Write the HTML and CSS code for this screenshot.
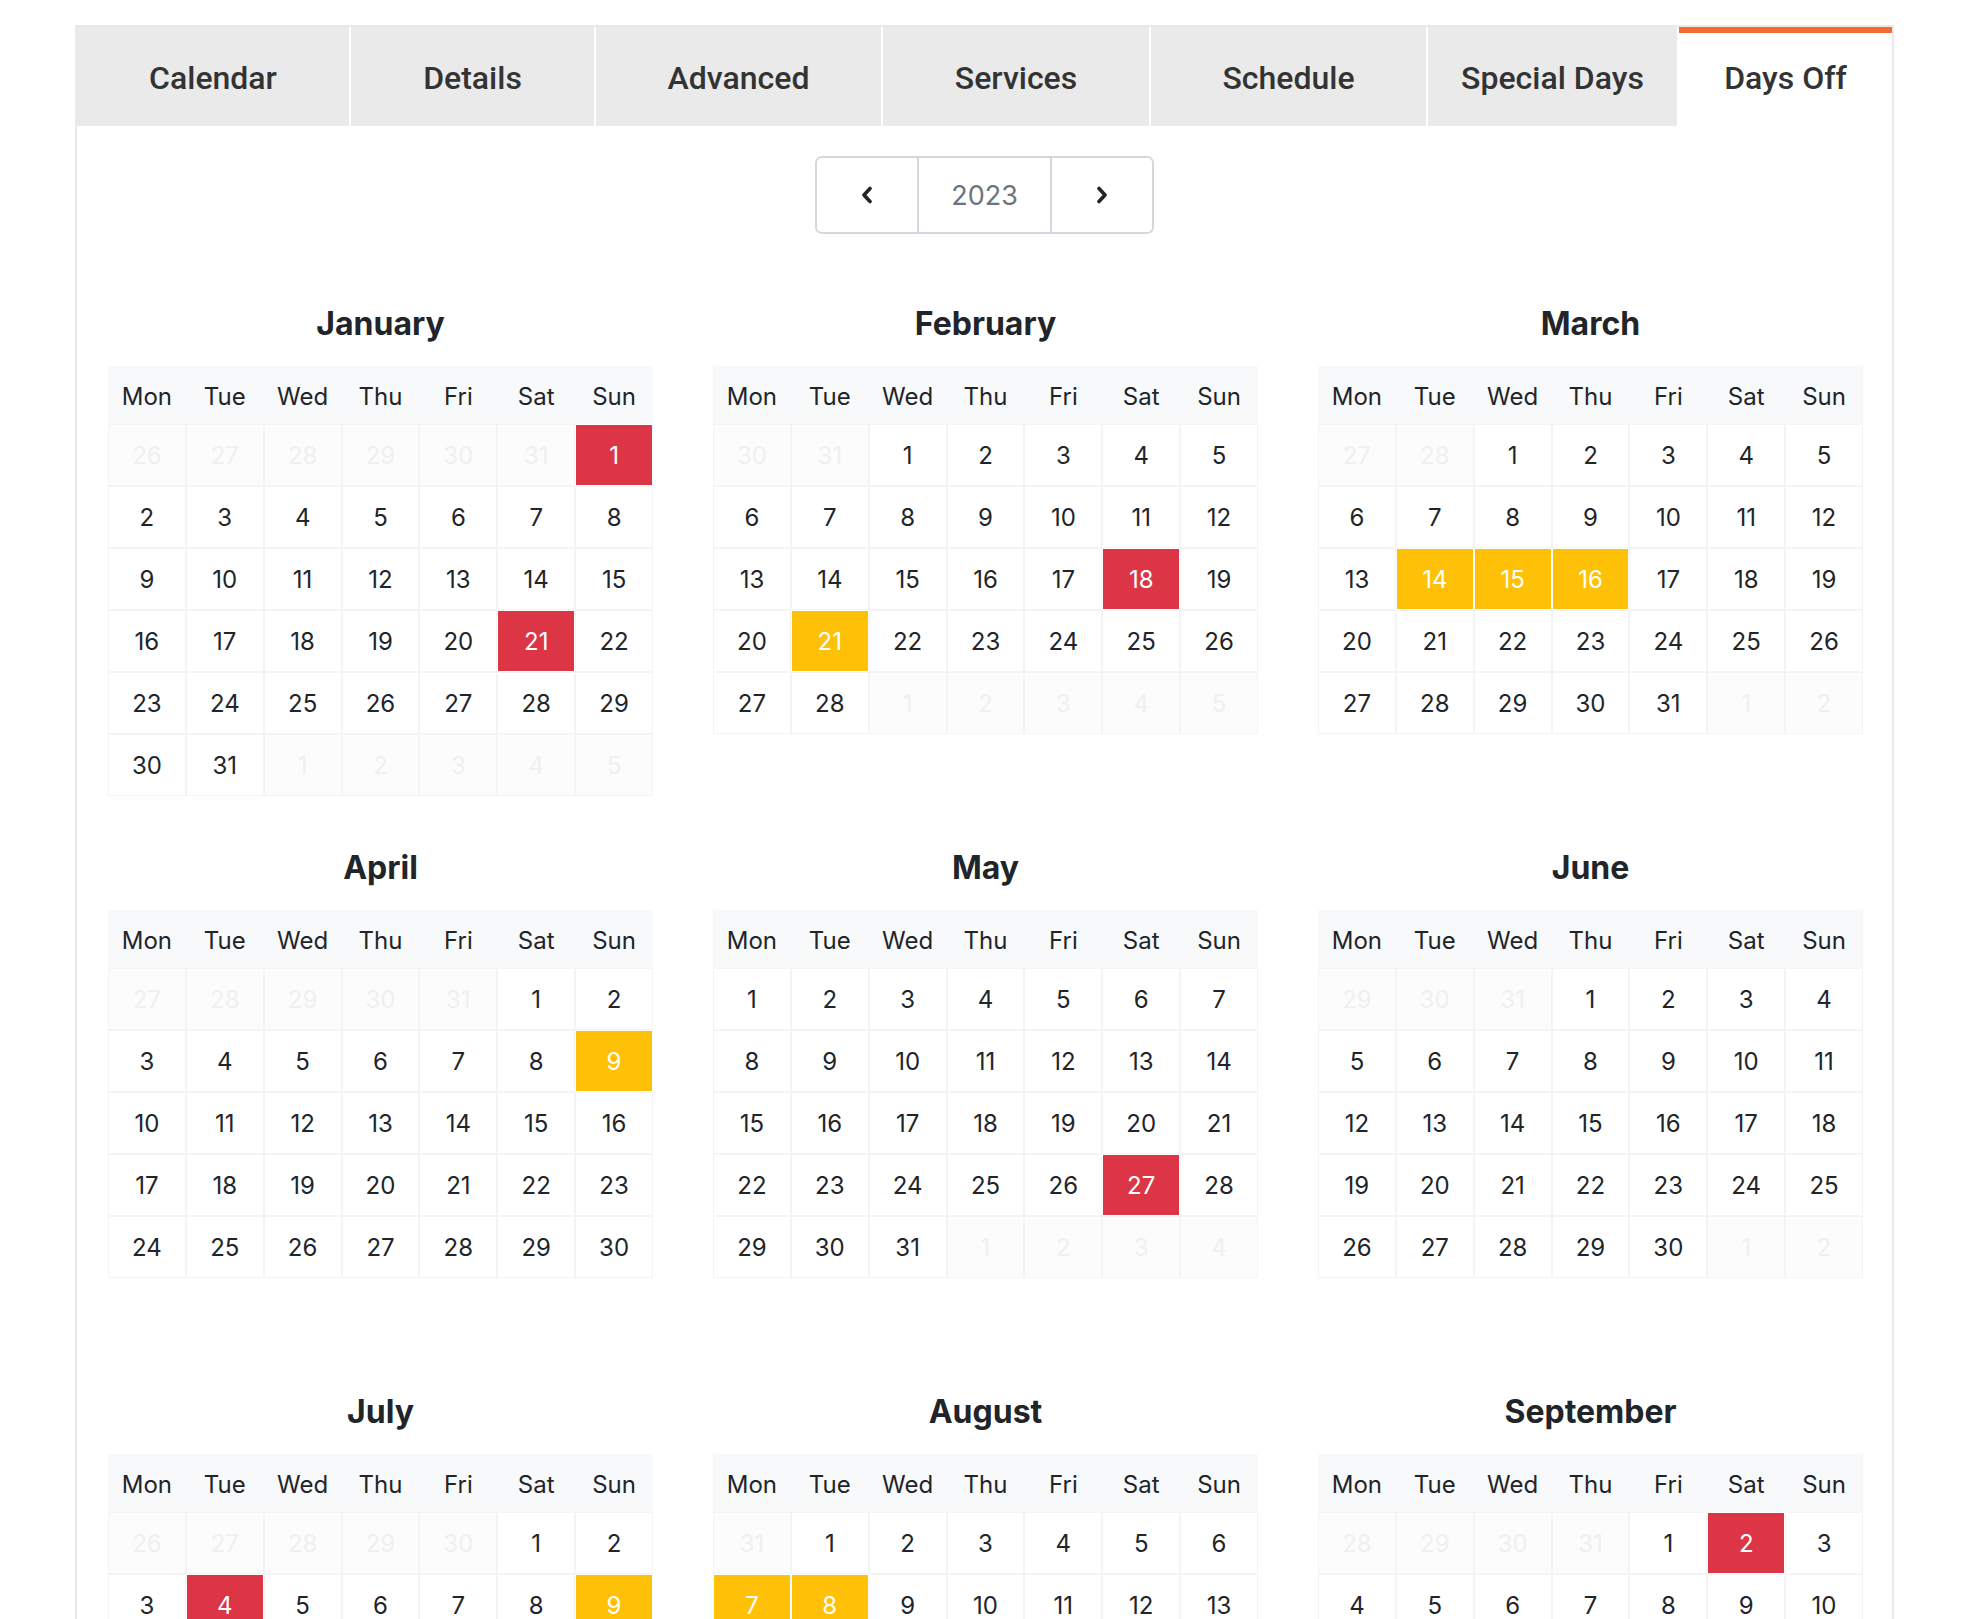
FILE: index.html
```html
<!DOCTYPE html>
<html lang="en">
<head>
<meta charset="utf-8">
<title>Days Off</title>
<link rel="stylesheet" href="styles.css">
</head>
<body>
<div class="panel">
  <nav class="tabs">
    <div class="tab tab-calendar">Calendar</div>
    <div class="tab tab-details">Details</div>
    <div class="tab tab-advanced">Advanced</div>
    <div class="tab tab-services">Services</div>
    <div class="tab tab-schedule">Schedule</div>
    <div class="tab tab-special">Special Days</div>
    <div class="tab tab-off active">Days Off</div>
  </nav>
  <div class="year-nav">
    <button class="nav-btn" type="button" aria-label="Previous year">
      <svg width="14" height="18" viewBox="0 0 14 18"><path d="M10 2.5 L4 9 L10 15.5" fill="none" stroke="#212529" stroke-width="3.6" stroke-linecap="round" stroke-linejoin="round"/></svg>
    </button>
    <div class="year">2023</div>
    <button class="nav-btn" type="button" aria-label="Next year">
      <svg width="14" height="18" viewBox="0 0 14 18"><path d="M4 2.5 L10 9 L4 15.5" fill="none" stroke="#212529" stroke-width="3.6" stroke-linecap="round" stroke-linejoin="round"/></svg>
    </button>
  </div>
  <div class="months" id="months"></div>
</div>
<script src="script.js"></script>
</body>
</html>
```

FILE: styles.css
```css
* { box-sizing: border-box; }
body {
  margin: 0;
  background: #fff;
  font-family: Inter, "Noto Sans", "Liberation Sans", sans-serif;
  color: #212529;
}
.panel {
  margin: 25px 0 0 75px;
  width: 1819px;
  min-height: 2200px;
  border: 2px solid #e9e9e9;
  border-bottom: none;
}
.tabs {
  display: flex;
  gap: 2px;
  height: 99px;
  background: #fff;
}
.tab {
  flex: 0 0 auto;
  display: flex;
  align-items: center;
  justify-content: center;
  padding-top: 2px;
  background: #eaeaea;
  font-family: Roboto, "Liberation Sans", sans-serif;
  font-weight: 500;
  font-size: 32px;
  color: #333;
  white-space: nowrap;
}
.tab-calendar { width: 272px; }
.tab-details { width: 243px; }
.tab-advanced { width: 285px; }
.tab-services { width: 266px; }
.tab-schedule { width: 275px; }
.tab-special { width: 249px; }
.tab-off { flex: 1 1 auto; }
.tab.active {
  background: #fff;
  box-shadow: inset 0 6px 0 #f36b32;
}
.year-nav {
  display: flex;
  width: 339px;
  height: 78px;
  margin: 30px auto 0;
  border: 2px solid #d3d8de;
  border-radius: 7px;
  overflow: hidden;
}
.nav-btn {
  width: 100px;
  border: none;
  background: #fff;
  display: flex;
  align-items: center;
  justify-content: center;
  padding: 0;
}
.year {
  flex: 1;
  display: flex;
  align-items: center;
  justify-content: center;
  border-left: 2px solid #d3d8de;
  border-right: 2px solid #d3d8de;
  font-size: 27px;
  color: #6c757d;
}
.months {
  display: grid;
  grid-template-columns: repeat(3, 545px);
  column-gap: 60px;
  row-gap: 51px;
  padding: 0 29px 0 31px;
  margin-top: 70px;
}
.month {
  min-height: 493px;
}
.month-title {
  margin: 0 0 22px;
  height: 40px;
  line-height: 40px;
  text-align: center;
  font-size: 32px;
  font-weight: 700;
  color: #212529;
}
.weekdays {
  display: grid;
  grid-template-columns: repeat(7, 1fr);
  height: 58px;
  padding-top: 2px;
  background: #f8f9fa;
}
.weekdays span {
  display: flex;
  align-items: center;
  justify-content: center;
  font-size: 24px;
  color: #212529;
}
.days {
  display: grid;
  grid-template-columns: repeat(7, 1fr);
}
.day {
  height: 62px;
  display: flex;
  align-items: center;
  justify-content: center;
  font-size: 24px;
  color: #212529;
  background: #fff;
  border: 1px solid #f3f4f5;
}
.day.other {
  background: #fcfcfd;
  color: #eef0f2;
}
.day.red {
  background: #dc3545;
  color: #fff;
  border-color: #fff;
}
.day.yellow {
  background: #ffc107;
  color: #fff;
  border-color: #fff;
}
```

FILE: script.js
```js
(function () {
  var names = ['January', 'February', 'March', 'April', 'May', 'June',
    'July', 'August', 'September', 'October', 'November', 'December'];
  var wd = ['Mon', 'Tue', 'Wed', 'Thu', 'Fri', 'Sat', 'Sun'];
  var marks = {
    0: { 1: 'red', 21: 'red' },
    1: { 18: 'red', 21: 'yellow' },
    2: { 14: 'yellow', 15: 'yellow', 16: 'yellow' },
    3: { 9: 'yellow' },
    4: { 27: 'red' },
    6: { 4: 'red', 9: 'yellow' },
    7: { 7: 'yellow', 8: 'yellow' },
    8: { 2: 'red' }
  };
  var year = 2023;
  var root = document.getElementById('months');
  for (var m = 0; m < 12; m++) {
    var month = document.createElement('div');
    month.className = 'month';
    var title = document.createElement('h3');
    title.className = 'month-title';
    title.textContent = names[m];
    month.appendChild(title);
    var head = document.createElement('div');
    head.className = 'weekdays';
    wd.forEach(function (w) {
      var s = document.createElement('span');
      s.textContent = w;
      head.appendChild(s);
    });
    month.appendChild(head);
    var grid = document.createElement('div');
    grid.className = 'days';
    var offset = (new Date(year, m, 1).getDay() + 6) % 7;
    var count = new Date(year, m + 1, 0).getDate();
    var prev = new Date(year, m, 0).getDate();
    var total = Math.ceil((offset + count) / 7) * 7;
    for (var i = 0; i < total; i++) {
      var c = document.createElement('div');
      c.className = 'day';
      var n;
      if (i < offset) {
        n = prev - offset + 1 + i;
        c.className += ' other';
      } else if (i >= offset + count) {
        n = i - offset - count + 1;
        c.className += ' other';
      } else {
        n = i - offset + 1;
        var mk = marks[m] && marks[m][n];
        if (mk) c.className += ' ' + mk;
      }
      c.textContent = n;
      grid.appendChild(c);
    }
    month.appendChild(grid);
    root.appendChild(month);
  }
})();
```
